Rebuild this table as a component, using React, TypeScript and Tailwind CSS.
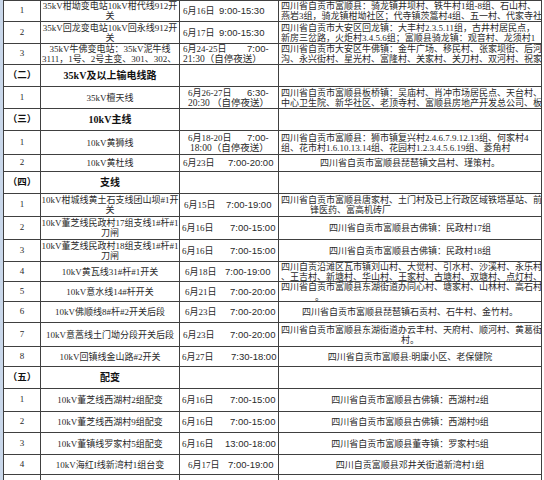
type Line = { s: string; c: string };
type Time = { pl: string; dw: string; date: string; time: string; l2?: string; l2pl?: string };
type Row =
  | { kind: 'sec'; no: string; title: string; h: string }
  | { kind: 'item'; no: string; h: string; name: Line[]; t: Time; area: Line[] };

const C = 'text-center';
const LEFT = 'pl-[2px]';
const L = (s: string, c: string = C): Line => ({ s, c });

const rows: Row[] = [
  {
    kind: 'item', no: '1', h: 'h-[21px]',
    name: [L('35kV柑坳变电站10kV柑代线912开'), L('关')],
    t: { pl: 'pl-[3px]', dw: 'w-[36px]', date: '6月16日', time: '9:00-15:30' },
    area: [L('四川省自贡市富顺县：骑龙镇井坝村、铁牛村1组-8组、石山村、', LEFT), L('燕岩3组，骑龙镇柑坳社区；代寺镇茨篙村4组、五一村、代家寺社', LEFT)],
  },
  {
    kind: 'item', no: '2', h: 'h-[22px]',
    name: [L('35kV回龙变电站10kV回永线912开'), L('关')],
    t: { pl: 'pl-[3px]', dw: 'w-[36px]', date: '6月17日', time: '9:00-15:30' },
    area: [L('四川省自贡市大安区回龙镇：大丰村2.3.5.11组，古井村居民点，', LEFT), L('新房三岔路，火炬村3.4.5.6组；富顺县骑龙镇：观音村、龙须村1', LEFT)],
  },
  {
    kind: 'item', no: '3', h: 'h-[21px]',
    name: [L('35kV牛佛变电站：35kV泥牛线'), L('3111，1号、2号主变、301、302、', 'pl-[1px]')],
    t: { pl: 'pl-[3px]', dw: 'w-[64px]', date: '6月24-25日', time: '7:00-', l2: '21:30（自停夜送）', l2pl: 'pl-[3px]' },
    area: [L('四川省自贡市大安区牛佛镇：金牛广场、移民村、张家坝街、后河', LEFT), L('沟、永兴街村、星光村、富隆村、关家村、关刀村、双河村、祝家', LEFT)],
  },
  { kind: 'sec', no: '（二）', title: '35kV及以上输电线路', h: 'h-[22px]' },
  {
    kind: 'item', no: '1', h: 'h-[22px]',
    name: [L('35kV檀天线')],
    t: { pl: 'pl-[8px]', dw: 'w-[59px]', date: '6月26-27日', time: '6:30-', l2: '20:30 （自停夜送）', l2pl: 'pl-[8px]' },
    area: [L('四川省自贡市富顺县板桥镇：吴庙村、肖冲市场居民点、天台村、', LEFT), L('中心卫生院、新华社区、老顶寺村、富顺县房地产开发总公司、板', LEFT)],
  },
  { kind: 'sec', no: '（三）', title: '10kV主线', h: 'h-[22px]' },
  {
    kind: 'item', no: '1', h: 'h-[24px]',
    name: [L('10kV黄狮线')],
    t: { pl: 'pl-[8px]', dw: 'w-[59px]', date: '6月18-20日', time: '7:00-', l2: '18:00（自停夜送）', l2pl: 'pl-[10px]' },
    area: [L('四川省自贡市富顺县：狮市镇复兴村2.4.6.7.9.12.13组、何家村4', LEFT), L('组、花市村1.6.10.13.14组、花园村1.2.3.4.5.6.19组、菱角村', LEFT)],
  },
  {
    kind: 'item', no: '2', h: 'h-[17px]',
    name: [L('10kV黄杜线')],
    t: { pl: 'pl-[3px]', dw: 'w-[45px]', date: '6月23日', time: '7:00-20:00' },
    area: [L('四川省自贡市富顺县琵琶镇文昌村、瑾策村。')],
  },
  { kind: 'sec', no: '（四）', title: '支线', h: 'h-[22px]' },
  {
    kind: 'item', no: '1', h: 'h-[23px]',
    name: [L('10kV柑城线黄土石支线团山坝#1开'), L('关')],
    t: { pl: 'pl-[4px]', dw: 'w-[42px]', date: '6月15日', time: '7:00-19:00' },
    area: [L('四川省自贡市富顺县唐家村、土门村及已上行政区域铁塔基站、前', LEFT), L('锋医药、富高机砖厂', 'pl-[31px]')],
  },
  {
    kind: 'item', no: '2', h: 'h-[23px]',
    name: [L('10kV董芝线民政村17组支线1#杆#1'), L('刀闸')],
    t: { pl: 'pl-[2px]', dw: 'w-[48px]', date: '6月16日', time: '7:00-15:00' },
    area: [L('四川省自贡市富顺县古佛镇：民政村17组')],
  },
  {
    kind: 'item', no: '3', h: 'h-[22px]',
    name: [L('10kV董芝线民政村18组支线1#杆#1'), L('刀闸')],
    t: { pl: 'pl-[2px]', dw: 'w-[48px]', date: '6月16日', time: '7:00-15:00' },
    area: [L('四川省自贡市富顺县古佛镇：民政村18组')],
  },
  {
    kind: 'item', no: '4', h: 'h-[20px]',
    name: [L('10kV黄瓦线31#杆#1开关')],
    t: { pl: 'pl-[5px]', dw: 'w-[40px]', date: '6月18日', time: '7:00-19:00' },
    area: [L('四川自贡沿滩区瓦市镇刘山村、大觉村、引水村、沙溪村、永乐村', LEFT), L('、王吉村、新塘村、华山村、王家村、古塘村、双塘村、点灯村、', LEFT)],
  },
  {
    kind: 'item', no: '5', h: 'h-[20px]',
    name: [L('10kV意水线14#杆开关')],
    t: { pl: 'pl-[5px]', dw: 'w-[45px]', date: '6月21日', time: '7:00-20:00' },
    area: [L('四川省自贡市富顺县东湖街道办同心村、塘家村、山林村、高石村', LEFT), L('。', 'pl-[36px]')],
  },
  {
    kind: 'item', no: '6', h: 'h-[21px]',
    name: [L('10kV佛顺线8#杆#2开关后段')],
    t: { pl: 'pl-[5px]', dw: 'w-[45px]', date: '6月23日', time: '7:00-20:00' },
    area: [L('四川省自贡市富顺县琵琶镇石贡村、石牛村、金竹村。')],
  },
  {
    kind: 'item', no: '7', h: 'h-[24px]',
    name: [L('10kV意蒿线土门坳分段开关后段')],
    t: { pl: 'pl-[3px]', dw: 'w-[47px]', date: '6月23日', time: '7:00-20:00' },
    area: [L('四川省自贡市富顺县东湖街道办云丰村、天府村、顺河村、黄葛街', LEFT), L('村。')],
  },
  {
    kind: 'item', no: '8', h: 'h-[20px]',
    name: [L('10kV回镇线金山路#2开关')],
    t: { pl: 'pl-[2px]', dw: 'w-[49px]', date: '6月27日', time: '7:30-18:00' },
    area: [L('四川省自贡市富顺县:明康小区、老保健院')],
  },
  { kind: 'sec', no: '（五）', title: '配变', h: 'h-[22px]' },
  {
    kind: 'item', no: '1', h: 'h-[23px]',
    name: [L('10kV董芝线西湖村2组配变')],
    t: { pl: 'pl-[2px]', dw: 'w-[48px]', date: '6月16日', time: '7:00-15:00' },
    area: [L('四川省自贡市富顺县古佛镇：西湖村2组')],
  },
  {
    kind: 'item', no: '2', h: 'h-[21px]',
    name: [L('10kV董芝线西湖村9组配变')],
    t: { pl: 'pl-[2px]', dw: 'w-[48px]', date: '6月16日', time: '7:00-15:00' },
    area: [L('四川省自贡市富顺县古佛镇：西湖村9组')],
  },
  {
    kind: 'item', no: '3', h: 'h-[22px]',
    name: [L('10kV董镇线罗家村5组配变')],
    t: { pl: 'pl-[2px]', dw: 'w-[43px]', date: '6月16日', time: '13:00-18:00' },
    area: [L('四川省自贡市富顺县董寺镇：罗家村5组')],
  },
  {
    kind: 'item', no: '4', h: 'h-[20px]',
    name: [L('10kV海红I线新湾村1组台变')],
    t: { pl: 'pl-[8px]', dw: 'w-[40px]', date: '6月17日', time: '7:00-19:00' },
    area: [L('四川自贡富顺县邓井关街道新湾村1组')],
  },
];

function Lines({ lines }: { lines: Line[] }) {
  return (
    <>
      {lines.map((l, i) => (
        <div key={i} className={`whitespace-nowrap leading-[10px] ${l.c}`}>
          {l.s}
        </div>
      ))}
    </>
  );
}

function TimeCell({ t }: { t: Time }) {
  return (
    <div className="w-[99px] shrink-0 border-r border-[#404040] flex flex-col justify-center overflow-hidden">
      <div className={`flex items-baseline whitespace-nowrap leading-[10px] ${t.pl}`}>
        <span className={`shrink-0 text-[9px] ${t.dw}`}>{t.date}</span>
        <span className="shrink-0 text-[9.5px] font-['Liberation_Sans','Noto_Sans_CJK_SC',sans-serif]">{t.time}</span>
      </div>
      {t.l2 && <div className={`whitespace-nowrap leading-[10px] text-[9.5px] ${t.l2pl}`}>{t.l2}</div>}
    </div>
  );
}

export default function App() {
  return (
    <div className="w-[544px] h-[480px] overflow-hidden bg-white flex text-[9px] text-[#2a2a2a] font-['Liberation_Serif','Noto_Sans_CJK_SC',serif]">
      {/* sheet row-header edge */}
      <div className="w-[3px] shrink-0 bg-[#c9d7ea]" />
      <div className="w-[539px] shrink-0 border-l border-t border-[#404040] flex flex-col">
        {rows.map((r, i) =>
          r.kind === 'sec' ? (
            <div key={i} className={`flex shrink-0 border-b border-[#404040] ${r.h}`}>
              <div className="w-[37px] shrink-0 border-r border-[#404040] flex items-center justify-center font-bold text-[9.5px] text-[#111]">
                {r.no}
              </div>
              <div className="w-[139px] shrink-0 border-r border-[#404040] flex items-center justify-center font-bold text-[10px] text-[#111]">
                {r.title}
              </div>
              <div className="w-[99px] shrink-0 border-r border-[#404040]" />
              <div className="w-[263px] shrink-0 border-r border-[#404040]" />
            </div>
          ) : (
            <div key={i} className={`flex shrink-0 border-b border-[#404040] ${r.h}`}>
              <div className="w-[37px] shrink-0 border-r border-[#404040] flex items-center justify-center">
                {r.no}
              </div>
              <div className="w-[139px] shrink-0 border-r border-[#404040] flex flex-col justify-center overflow-hidden">
                <Lines lines={r.name} />
              </div>
              <TimeCell t={r.t} />
              <div className="w-[263px] shrink-0 border-r border-[#404040] flex flex-col justify-center overflow-hidden">
                <Lines lines={r.area} />
              </div>
            </div>
          )
        )}
        <div className="flex shrink-0 h-[20px]">
          <div className="w-[37px] shrink-0 border-r border-[#404040]" />
          <div className="w-[139px] shrink-0 border-r border-[#404040]" />
          <div className="w-[99px] shrink-0 border-r border-[#404040]" />
          <div className="w-[263px] shrink-0 border-r border-[#404040]" />
        </div>
      </div>
    </div>
  );
}
